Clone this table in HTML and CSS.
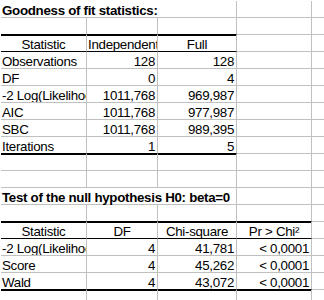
FILE: index.html
```html
<!DOCTYPE html>
<html>
<head>
<meta charset="utf-8">
<link rel="stylesheet" href="styles.css">
</head>
<body>
<div class="sheet">
  <div class="row"><div class="cell span3 title">Goodness of fit statistics:</div><div class="cell cd"></div><div class="cell ce"></div></div>
  <div class="row"><div class="cell ca thick"></div><div class="cell cb thick"></div><div class="cell cc thick"></div><div class="cell cd"></div><div class="cell ce"></div></div>
  <div class="row"><div class="cell ca ctr hd">Statistic</div><div class="cell cb ctr hd">Independent</div><div class="cell cc ctr hd">Full</div><div class="cell cd"></div><div class="cell ce"></div></div>
  <div class="row"><div class="cell ca">Observations</div><div class="cell cb num">128</div><div class="cell cc num">128</div><div class="cell cd"></div><div class="cell ce"></div></div>
  <div class="row"><div class="cell ca">DF</div><div class="cell cb num">0</div><div class="cell cc num">4</div><div class="cell cd"></div><div class="cell ce"></div></div>
  <div class="row"><div class="cell ca">-2 Log(Likelihood)</div><div class="cell cb num">1011,768</div><div class="cell cc num">969,987</div><div class="cell cd"></div><div class="cell ce"></div></div>
  <div class="row"><div class="cell ca">AIC</div><div class="cell cb num">1011,768</div><div class="cell cc num">977,987</div><div class="cell cd"></div><div class="cell ce"></div></div>
  <div class="row"><div class="cell ca">SBC</div><div class="cell cb num">1011,768</div><div class="cell cc num">989,395</div><div class="cell cd"></div><div class="cell ce"></div></div>
  <div class="row"><div class="cell ca thick">Iterations</div><div class="cell cb num thick">1</div><div class="cell cc num thick">5</div><div class="cell cd"></div><div class="cell ce"></div></div>
  <div class="row"><div class="cell ca"></div><div class="cell cb"></div><div class="cell cc"></div><div class="cell cd"></div><div class="cell ce"></div></div>
  <div class="row"><div class="cell ca"></div><div class="cell cb"></div><div class="cell cc"></div><div class="cell cd"></div><div class="cell ce"></div></div>
  <div class="row"><div class="cell span3 title">Test of the null hypothesis H0: beta=0</div><div class="cell cd"></div><div class="cell ce"></div></div>
  <div class="row"><div class="cell ca thick"></div><div class="cell cb thick"></div><div class="cell cc thick"></div><div class="cell cd thick"></div><div class="cell ce"></div></div>
  <div class="row"><div class="cell ca ctr hd">Statistic</div><div class="cell cb ctr hd">DF</div><div class="cell cc ctr hd">Chi-square</div><div class="cell cd ctr hd">Pr &gt; Chi²</div><div class="cell ce"></div></div>
  <div class="row"><div class="cell ca">-2 Log(Likelihood)</div><div class="cell cb num">4</div><div class="cell cc num">41,781</div><div class="cell cd num">&lt; 0,0001</div><div class="cell ce"></div></div>
  <div class="row"><div class="cell ca">Score</div><div class="cell cb num">4</div><div class="cell cc num">45,262</div><div class="cell cd num">&lt; 0,0001</div><div class="cell ce"></div></div>
  <div class="row"><div class="cell ca thick">Wald</div><div class="cell cb num thick">4</div><div class="cell cc num thick">43,072</div><div class="cell cd num thick">&lt; 0,0001</div><div class="cell ce"></div></div>
  <div class="row"><div class="cell ca"></div><div class="cell cb"></div><div class="cell cc"></div><div class="cell cd"></div><div class="cell ce"></div></div>
</div>
</body>
</html>
```

FILE: styles.css
```css
html, body {
  margin: 0;
  padding: 0;
  background: #fff;
  overflow: hidden;
}
body {
  font-family: "Liberation Sans", Arial, sans-serif;
  font-size: 13.333px;
  letter-spacing: -0.3px;
  color: #000;
}
.sheet {
  width: 420px;
  padding: 1px 0 0 1px;
}
.row {
  display: flex;
  height: 17px;
}
.cell {
  box-sizing: border-box;
  flex: none;
  height: 17px;
  border-right: 1px solid #c0c0c0;
  border-bottom: 1px solid #c0c0c0;
  padding: 1px 2px 0 1px;
  line-height: 17px;
  overflow: hidden;
  white-space: nowrap;
}
.ca { width: 86px; }
.cb { width: 71px; }
.cc { width: 79px; }
.cd { width: 75px; }
.ce { width: 100px; }
.span3 { width: 236px; }
.title {
  font-weight: bold;
  overflow: visible;
}
.num { text-align: right; }
.ctr { text-align: center; padding-right: 1px; }
.hd { border-bottom-color: #000; }
.thick {
  border-bottom-color: #000;
  box-shadow: 0 1px 0 #000;
}
```
